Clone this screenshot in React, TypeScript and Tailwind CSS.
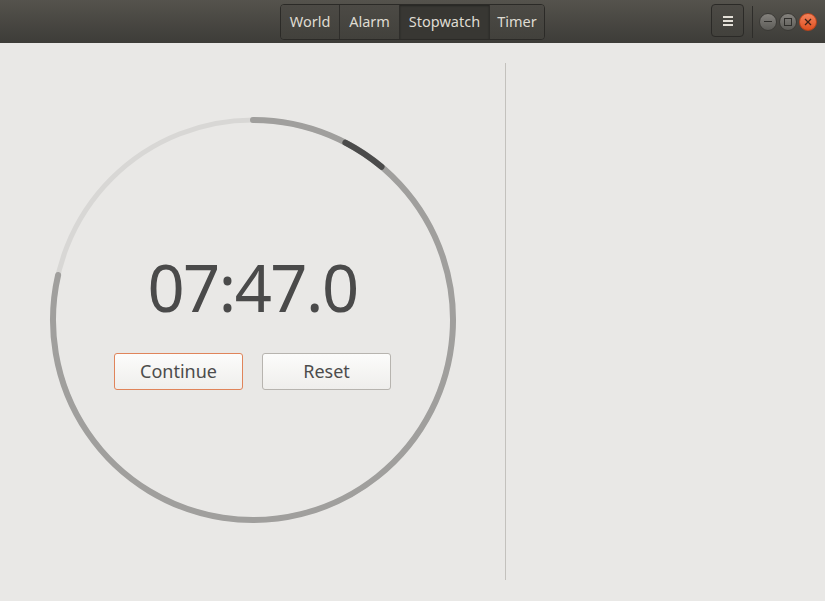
import React from "react";

const FONT = { fontFamily: '"Noto Sans", "Open Sans", sans-serif' };

// ============================================================================
// DIAL GEOMETRY
// ============================================================================

const C = 206;
const R = 200;

const point = (deg: number) => {
	const rad = (deg * Math.PI) / 180;
	return `${(C + R * Math.cos(rad)).toFixed(2)} ${(C + R * Math.sin(rad)).toFixed(2)}`;
};

const arc = (from: number, to: number) => {
	const large = to - from > 180 ? 1 : 0;
	return `M ${point(from)} A ${R} ${R} 0 ${large} 1 ${point(to)}`;
};

const tabs = [
	{ label: "World", w: "w-[58px]" },
	{ label: "Alarm", w: "w-[60px]" },
	{ label: "Stopwatch", w: "w-[90px]", active: true },
	{ label: "Timer", w: "w-[55px]" },
];

function Dial() {
	return (
		<svg width={412} height={412} viewBox="0 0 412 412" className="col-start-1 row-start-1">
			<circle cx={C} cy={C} r={R} fill="none" stroke="#d8d7d5" strokeWidth={5} />
			<path d={arc(-90, 193)} fill="none" stroke="#a09f9d" strokeWidth={6} strokeLinecap="round" />
			<path d={arc(-62.5, -50)} fill="none" stroke="#4b4b4b" strokeWidth={6} strokeLinecap="round" />
		</svg>
	);
}

function WindowButton({ close, children }: { close?: boolean; children: React.ReactNode }) {
	return (
		<div
			className={
				close
					? "w-[18px] h-[18px] rounded-full flex items-center justify-center bg-gradient-to-b from-[#f3825a] to-[#df4f1c] border border-[#b8431c]"
					: "w-[18px] h-[18px] rounded-full flex items-center justify-center bg-gradient-to-b from-[#85837e] to-[#5d5c58] border border-[#3b3a36]"
			}
		>
			{children}
		</div>
	);
}

export default function App() {
	return (
		<div className="w-[825px] h-[601px] flex flex-col bg-[#e9e8e6] overflow-hidden" style={FONT}>
			{/* Header bar */}
			<div className="h-[43px] shrink-0 flex items-center bg-gradient-to-b from-[#55534d] to-[#3d3c38] relative">
				<div className="flex-1 flex justify-center">
					<div className="flex h-[36px] rounded-[4px] border border-[#2b2a27] overflow-hidden">
						{tabs.map((t, i) => (
							<div
								key={t.label}
								className={`${t.w} flex items-center justify-center text-[14.5px] text-[#dfdbd2] ${
									i > 0 ? "border-l border-[#2f2e2b]" : ""
								} ${
									t.active
										? "bg-[#383733] shadow-[inset_0_1px_2px_rgba(0,0,0,0.35)]"
										: "bg-gradient-to-b from-[#4c4a45] to-[#42413c]"
								}`}
							>
								{t.label}
							</div>
						))}
					</div>
				</div>

				{/* Menu + window controls */}
				<div className="absolute right-0 top-0 h-[43px] flex items-center">
					<div className="w-[33px] h-[33px] rounded-[4px] border border-[#2b2a27] bg-gradient-to-b from-[#4c4a45] to-[#42413c] flex flex-col items-center justify-center gap-[2px] mb-[2px]">
						<span className="block w-[10px] h-[2px] bg-[#e4e0d8]" />
						<span className="block w-[10px] h-[2px] bg-[#e4e0d8]" />
						<span className="block w-[10px] h-[2px] bg-[#e4e0d8]" />
					</div>
					<div className="w-px h-[32px] bg-[#2e2d2a] ml-[8px] mr-[6px]" />
					<div className="flex items-center gap-[2px] mr-[8px]">
						<WindowButton>
							<span className="block w-[8px] h-[1.5px] bg-[#2f2e2b]" />
						</WindowButton>
						<WindowButton>
							<span className="block w-[8px] h-[8px] border border-[#2f2e2b]" />
						</WindowButton>
						<WindowButton close>
							<svg width="8" height="8" viewBox="0 0 8 8">
								<path d="M1 1 L7 7 M7 1 L1 7" stroke="#3a2218" strokeWidth="1.3" />
							</svg>
						</WindowButton>
					</div>
				</div>
			</div>

			{/* Content */}
			<div className="flex-1 flex">
				<div className="w-[505px] flex items-center justify-center pb-[4px]">
					<div className="grid">
						<Dial />
						<div className="col-start-1 row-start-1 flex flex-col items-center pt-[141px]">
							<div className="h-[68px] leading-none text-[65px] tracking-[-1.5px] text-[#4a4a4a]">07:47.0</div>
							<div className="flex gap-[19px] mt-[30px]">
								<button className="w-[129px] h-[37px] rounded-[3px] border border-[#e0845a] bg-gradient-to-b from-[#fcfcfb] to-[#efeeec] text-[18px] text-[#4c4c4c]">
									Continue
								</button>
								<button className="w-[129px] h-[37px] rounded-[3px] border border-[#b7b4af] bg-gradient-to-b from-[#fcfcfb] to-[#efeeec] text-[18px] text-[#4c4c4c]">
									Reset
								</button>
							</div>
						</div>
					</div>
				</div>
				<div className="w-px bg-[#c3c1bd] mt-[20px] mb-[21px]" />
				<div className="flex-1" />
			</div>
		</div>
	);
}
